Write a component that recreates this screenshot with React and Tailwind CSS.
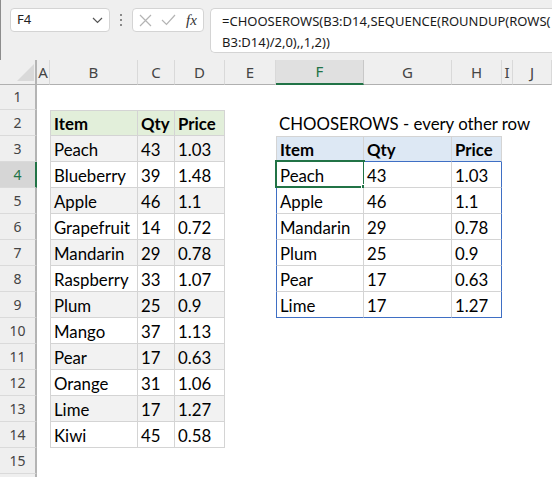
import React from 'react';

const L = [
  ['Peach', '43', '1.03'],
  ['Blueberry', '39', '1.48'],
  ['Apple', '46', '1.1'],
  ['Grapefruit', '14', '0.72'],
  ['Mandarin', '29', '0.78'],
  ['Raspberry', '33', '1.07'],
  ['Plum', '25', '0.9'],
  ['Mango', '37', '1.13'],
  ['Pear', '17', '0.63'],
  ['Orange', '31', '1.06'],
  ['Lime', '17', '1.27'],
  ['Kiwi', '45', '0.58'],
];
const R = [L[0], L[2], L[4], L[6], L[8], L[10]];

const GRID = 'grid grid-cols-[37px_13px_88px_37px_50px_51px_88px_88px_50px_11px_1fr]';
const CELL = 'h-[26px] flex items-center px-[3px] pt-[2px] whitespace-nowrap text-[16.8px] text-black';

function Toolbar() {
  return (
    <div className="h-[60px] bg-[#efefef] border-l border-[#8c8c8c] flex items-start pt-[8px] font-['Noto_Sans',sans-serif]">
      <div className="ml-[9px] w-[100px] h-[24px] bg-white rounded-[4px] border border-[#d4d4d4] flex items-center justify-between pl-[6px] pr-[6px]">
        <span className="text-[13px] text-[#222]">F4</span>
        <svg width="11" height="7" viewBox="0 0 11 7"><path d="M1 1l4.5 4.5L10 1" fill="none" stroke="#555" strokeWidth="1.2" /></svg>
      </div>
      <div className="w-[22px] h-[24px] flex flex-col items-center justify-center gap-[3px]">
        <div className="w-[2px] h-[2px] bg-[#8a8a8a]" />
        <div className="w-[2px] h-[2px] bg-[#8a8a8a]" />
        <div className="w-[2px] h-[2px] bg-[#8a8a8a]" />
      </div>
      <div className="w-[72px] h-[24px] bg-white rounded-[4px] border border-[#d4d4d4] flex items-center pl-[6px] gap-[9px]">
        <svg width="13" height="13" viewBox="0 0 13 13"><path d="M1 1l11 11M12 1L1 12" stroke="#b4b4b4" strokeWidth="1.2" /></svg>
        <svg width="15" height="12" viewBox="0 0 15 12"><path d="M1 6l4.5 4.5L14 1" fill="none" stroke="#b4b4b4" strokeWidth="1.2" /></svg>
        <span className="text-[15px] italic text-[#333] font-['Liberation_Serif',serif] ml-[1px]">fx</span>
      </div>
      <div className="ml-[6px] flex-1 h-[45px] bg-white rounded-l-[5px] border border-r-0 border-[#d4d4d4] pl-[11px] pt-[2px] text-[13px] leading-[21px] text-[#1a1a1a] whitespace-nowrap overflow-hidden">
        <div>=CHOOSEROWS(B3:D14,SEQUENCE(ROUNDUP(ROWS(</div>
        <div>B3:D14)/2,0),,1,2))</div>
      </div>
    </div>
  );
}

function ColHeaders() {
  const cols = ['A', 'B', 'C', 'D', 'E', 'F', 'G', 'H', 'I', 'J'];
  return (
    <div className={`${GRID} h-[24px] bg-[#efefef] font-['Noto_Sans',sans-serif]`}>
      <div className="relative border-r-2 border-r-[#b4b4b4] border-b border-b-[#b0b0b0]">
        <svg className="absolute left-[17px] top-[4px]" width="17" height="17" viewBox="0 0 17 17"><path d="M17 0V17H0Z" fill="#d9d9d9" /></svg>
      </div>
      {cols.map((c) => {
        const sel = c === 'F';
        return (
          <div
            key={c}
            className={
              sel
                ? 'flex items-center justify-center text-[15px] text-[#217346] bg-[#e0e0e0] border-r border-r-[#c8c8c8] border-b-2 border-b-[#217346]'
                : 'flex items-center justify-center text-[15px] text-[#444] border-r border-r-[#d9d9d9] border-b border-b-[#b0b0b0] overflow-hidden'
            }
          >
            {c}
          </div>
        );
      })}
    </div>
  );
}

function leftCell(r, col) {
  if (r < 2 || r > 14) return <div className="h-[26px]" />;
  const bg = r === 2 ? 'bg-[#e2efda]' : r % 2 === 1 ? 'bg-[#f2f2f2]' : 'bg-white';
  const bt = r === 2 ? 'border-t' : '';
  const bl = col === 0 ? 'border-l' : '';
  let text;
  if (r === 2) text = ['Item', 'Qty', 'Price'][col];
  else text = L[r - 3][col];
  return (
    <div className={`${CELL} ${bg} ${bt} ${bl} border-r border-b border-[#d4d4d4] ${r === 2 ? 'font-bold' : ''}`}>
      {text}
    </div>
  );
}

function rightCell(r, col) {
  if (r === 2) {
    if (col === 0)
      return <div className={`${CELL} overflow-visible`}>CHOOSEROWS - every other row</div>;
    return <div className="h-[26px]" />;
  }
  if (r === 3) {
    return (
      <div
        className={`${CELL} font-bold bg-[#dde8f4] border-t border-t-[#d4d4d4] border-b border-b-[#3f6fc4] border-r border-r-[#d4d4d4] ${col === 0 ? 'border-l border-l-[#d4d4d4]' : ''}`}
      >
        {['Item', 'Qty', 'Price'][col]}
      </div>
    );
  }
  if (r >= 4 && r <= 9) {
    const d = R[r - 4];
    const bb = r === 9 ? 'border-b-[#3f6fc4]' : 'border-b-[#d4d4d4]';
    const br = col === 2 ? 'border-r-[#3f6fc4]' : 'border-r-[#d4d4d4]';
    const bl = col === 0 ? 'border-l border-l-[#3f6fc4]' : '';
    const selected = r === 4 && col === 0;
    return (
      <div className={`${CELL} relative bg-white border-b ${bb} border-r ${br} ${bl}`}>
        {d[col]}
        {selected && (
          <>
            <div className="absolute left-[-2px] top-[-2px] right-[-2px] bottom-[-1px] border-2 border-[#217346]" />
            <div className="absolute right-[-4px] bottom-[-3px] w-[6px] h-[6px] bg-[#217346] border border-white" />
          </>
        )}
      </div>
    );
  }
  return <div className="h-[26px]" />;
}

function Row({ r }) {
  const sel = r === 4;
  return (
    <div className={`${GRID} font-['Lato',sans-serif]`}>
      <div
        className={`h-[26px] flex items-center justify-center text-[14px] font-['Noto_Sans',sans-serif] border-b border-b-[#dadada] border-r-2 ${
          sel ? 'bg-[#d6d6d6] text-[#217346] border-r-[#217346]' : 'bg-[#efefef] text-[#444] border-r-[#b4b4b4]'
        }`}
      >
        {r <= 15 ? r : ''}
      </div>
      <div className="h-[26px]" />
      {leftCell(r, 0)}
      {leftCell(r, 1)}
      {leftCell(r, 2)}
      <div className="h-[26px]" />
      {rightCell(r, 0)}
      {rightCell(r, 1)}
      {rightCell(r, 2)}
      <div className="h-[26px]" />
      <div className="h-[26px]" />
    </div>
  );
}

export default function App() {
  const rows = Array.from({ length: 16 }, (_, i) => i + 1);
  return (
    <div className="w-[552px] h-[477px] overflow-hidden bg-white">
      <Toolbar />
      <ColHeaders />
      {rows.map((r) => (
        <Row key={r} r={r} />
      ))}
    </div>
  );
}
